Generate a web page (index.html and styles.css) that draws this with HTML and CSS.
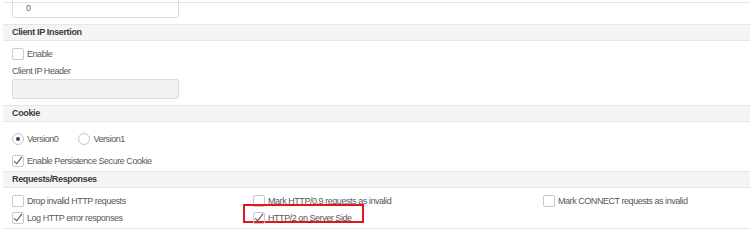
FILE: index.html
```html
<!DOCTYPE html>
<html lang="en">
<head>
  <meta charset="UTF-8" />
  <title>HTTP Profile</title>
  <link rel="stylesheet" href="styles.css">
</head>
<body>

<div class="panel">

  <!-- previous field (cut off) -->
  <div class="top-row">
    <div class="input value">0</div>
  </div>

  <!-- Client IP Insertion -->
  <div class="section-head">Client IP Insertion</div>
  <div class="section-body client">
    <label class="opt"><span class="box"></span>Enable</label>
    <div class="field-label">Client IP Header</div>
    <div class="input disabled"></div>
  </div>

  <!-- Cookie -->
  <div class="section-head">Cookie</div>
  <div class="section-body cookie">
    <div class="radios">
      <label class="opt"><span class="radio on"></span>Version0</label>
      <label class="opt"><span class="radio"></span>Version1</label>
    </div>
    <label class="opt"><span class="box checked"></span>Enable Persistence Secure Cookie</label>
  </div>

  <!-- Requests/Responses -->
  <div class="section-head">Requests/Responses</div>
  <div class="section-body grid">
    <label class="opt"><span class="box"></span>Drop invalid HTTP requests</label>
    <label class="opt"><span class="box"></span>Mark HTTP/0.9 requests as invalid</label>
    <label class="opt"><span class="box"></span>Mark CONNECT requests as invalid</label>
    <label class="opt"><span class="box checked"></span>Log HTTP error responses</label>
    <label class="opt marked"><span class="box checked"></span>HTTP/2 on Server Side</label>
  </div>

</div>

</body>
</html>
```

FILE: styles.css
```css
body {
  margin: 0;
  padding: 0;
  font-family: "Liberation Sans", Arial, sans-serif;
  font-size: 9px;
  letter-spacing: -0.45px;
  color: #585858;
  background: #fff;
}

.panel {
  margin-left: 3px;
}

.top-row {
  margin-top: 2px;
  border-top: 1px solid #e4e4e4;
  height: 21px;
  padding-left: 9px;
}

.input {
  width: 165px;
  height: 18px;
  border: 1px solid #dcdcdc;
  border-radius: 2px;
}

.input.value {
  margin-top: -4px;
  height: 17px;
  line-height: 17px;
  padding-left: 13px;
  width: 152px;
  color: #666;
}

.input.disabled {
  background: #f2f2f2;
  margin-top: 1px;
}

.section-head {
  height: 15px;
  line-height: 15px;
  padding-left: 9px;
  background: #f5f5f5;
  border-top: 1px solid #e6e6e6;
  border-bottom: 1px solid #e6e6e6;
  font-weight: bold;
  color: #3a3a3a;
  letter-spacing: -0.35px;
}

.section-body {
  padding: 6px 0 6px 9px;
}

.section-body.cookie {
  padding: 10px 0 4px 9px;
}

.opt {
  display: flex;
  align-items: center;
  height: 13px;
  margin-bottom: 9px;
  white-space: nowrap;
}

.client .opt {
  margin-bottom: 5px;
}

.cookie .opt:last-child {
  margin-bottom: 0;
}

.box {
  width: 10px;
  height: 10px;
  border: 1px solid #c9c9c9;
  border-radius: 2px;
  margin-right: 3px;
  flex: none;
  position: relative;
}

.box.checked::after {
  content: "";
  position: absolute;
  left: 3px;
  top: -1px;
  width: 3px;
  height: 8px;
  border-right: 1px solid #34486b;
  border-bottom: 1px solid #34486b;
  transform: rotate(38deg);
}

.radio {
  width: 10px;
  height: 10px;
  border: 1px solid #c4c4c4;
  border-radius: 50%;
  margin-right: 3px;
  flex: none;
  position: relative;
}

.radio.on::after {
  content: "";
  position: absolute;
  left: 3px;
  top: 3px;
  width: 4px;
  height: 4px;
  border-radius: 50%;
  background: #2b4470;
}

.radios {
  display: flex;
  gap: 20px;
}

.field-label {
  height: 13px;
  line-height: 13px;
}

.grid {
  display: grid;
  grid-template-columns: 241px 290px 1fr;
  padding: 6px 0 4px 9px;
  border-bottom: 1px solid #e6e6e6;
}

.grid .opt {
  margin-bottom: 0;
}

.grid .opt:nth-child(-n+3) {
  margin-bottom: 4px;
}

.marked {
  position: relative;
}

.marked::before {
  content: "";
  position: absolute;
  left: -10px;
  top: -7px;
  width: 117px;
  height: 15px;
  border: 2px solid #e3151f;
}
```
